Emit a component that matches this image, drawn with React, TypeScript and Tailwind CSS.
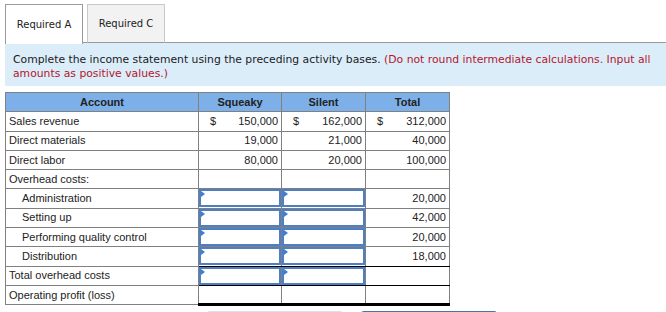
import React from "react";

const tahoma = { fontFamily: '"DejaVu Sans", Verdana, sans-serif' };
const arial = { fontFamily: '"Liberation Sans", Arial, sans-serif' };

function InputBox() {
  return (
    <div className="relative h-[18px] w-full border-2 border-[#4e7fc4] bg-white">
      <div className="absolute left-0 top-0 h-0 w-0 border-y-[3px] border-l-[4px] border-y-transparent border-l-[#3d7fd6]" />
    </div>
  );
}

type Cell =
  | { kind: "empty" }
  | { kind: "input" }
  | { kind: "num"; value: string; dollar?: boolean };

type Row = {
  label: string;
  indent?: boolean;
  cells: [Cell, Cell, Cell];
  bottomBlack?: boolean[];
  thickBottom?: boolean;
};

const E: Cell = { kind: "empty" };
const I: Cell = { kind: "input" };
const n = (value: string, dollar = false): Cell => ({ kind: "num", value, dollar });

const rows: Row[] = [
  { label: "Sales revenue", cells: [n("150,000", true), n("162,000", true), n("312,000", true)] },
  { label: "Direct materials", cells: [n("19,000"), n("21,000"), n("40,000")] },
  { label: "Direct labor", cells: [n("80,000"), n("20,000"), n("100,000")] },
  { label: "Overhead costs:", cells: [E, E, E] },
  { label: "Administration", indent: true, cells: [I, I, n("20,000")] },
  { label: "Setting up", indent: true, cells: [I, I, n("42,000")] },
  { label: "Performing quality control", indent: true, cells: [I, I, n("20,000")] },
  { label: "Distribution", indent: true, cells: [I, I, n("18,000")], bottomBlack: [true, true, true] },
  { label: "Total overhead costs", cells: [I, I, E], bottomBlack: [true, true, true] },
  { label: "Operating profit (loss)", cells: [E, E, E], thickBottom: true },
];

export default function App() {
  return (
    <div className="w-[666px] h-[312px] overflow-hidden bg-white text-[#222]">
      {/* Tabs */}
      <div className="flex items-end pt-[4px] pl-[5px]" style={tahoma}>
        <div className="relative z-10 -mb-px flex h-[40px] w-[78px] items-center justify-center border border-b-0 border-[#9a9a9a] bg-white text-[10px] text-[#222]">
          Required A
        </div>
        <div className="w-[4px] self-stretch border-b border-[#9a9a9a]" />
        <div className="flex h-[39px] w-[78px] items-center justify-center border border-[#c9c9c9] border-b-[#9a9a9a] bg-[#f2f2f2] text-[10px] text-[#222]">
          Required C
        </div>
        <div className="flex-1 self-stretch border-b border-[#9a9a9a]" />
      </div>

      {/* Info box */}
      <div
        className="ml-[5px] bg-[#dcedfa] pl-[8px] pr-[4px] pt-[10px] pb-[5px] text-[10.8px] leading-[14px] text-[#1a1a1a]"
        style={tahoma}
      >
        Complete the income statement using the preceding activity bases.{" "}
        <span className="text-[#b3162c]">
          (Do not round intermediate calculations. Input all amounts as positive values.)
        </span>
      </div>

      {/* Table */}
      <div className="ml-[5px] mt-[6px]" style={arial}>
        <table className="w-[444px] table-fixed border-collapse text-[11px] leading-[13px]">
          <colgroup>
            <col className="w-[193px]" />
            <col className="w-[83px]" />
            <col className="w-[84px]" />
            <col className="w-[84px]" />
          </colgroup>
          <thead>
            <tr className="h-[19.3px] bg-[#7db0e8]">
              <th className="border border-[#808080] p-0 text-center font-bold">Account</th>
              <th className="border border-[#808080] p-0 text-center font-bold">Squeaky</th>
              <th className="border border-[#808080] p-0 text-center font-bold">Silent</th>
              <th className="border border-[#808080] p-0 text-center font-bold">Total</th>
            </tr>
          </thead>
          <tbody>
            {rows.map((r) => (
              <tr key={r.label} className="h-[19.3px]">
                <td
                  className={
                    "border border-[#808080] py-0 pr-[3px] " +
                    (r.indent ? "pl-[16px]" : "pl-[3px]")
                  }
                >
                  {r.label}
                </td>
                {r.cells.map((c, i) => {
                  const black = r.bottomBlack?.[i];
                  const cls =
                    "border border-[#808080] " +
                    (r.thickBottom ? "border-b-[3px] border-b-black " : black ? "border-b-black " : "") +
                    (c.kind === "input" ? "p-0 align-top" : "py-0 pl-[11px] pr-[3px]");
                  return (
                    <td key={i} className={cls}>
                      {c.kind === "input" ? (
                        <InputBox />
                      ) : c.kind === "num" ? (
                        <div className="flex justify-between">
                          <span>{c.dollar ? "$" : ""}</span>
                          <span>{c.value}</span>
                        </div>
                      ) : null}
                    </td>
                  );
                })}
              </tr>
            ))}
          </tbody>
        </table>
      </div>

      {/* Buttons (partially visible) */}
      <div className="mt-[5px] flex gap-[18px] pl-[207px]">
        <div className="h-[30px] w-[136px] rounded-t-[3px] border-t-2 border-[#d8e2ec] bg-[#f4f7fa]" />
        <div className="h-[30px] w-[136px] rounded-t-[3px] bg-[#4a74a8]" />
      </div>
    </div>
  );
}
